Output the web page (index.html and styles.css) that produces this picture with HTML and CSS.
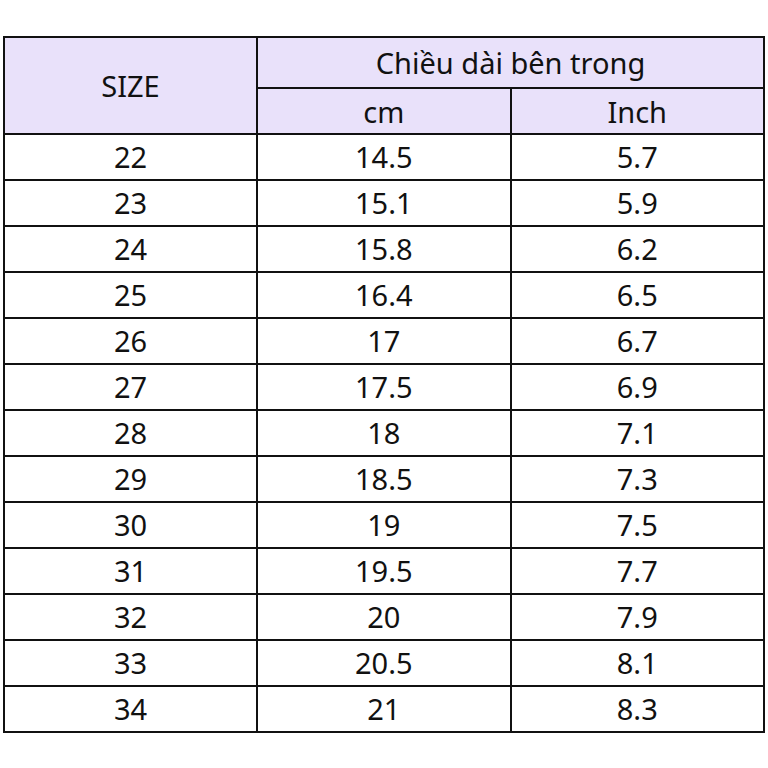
FILE: index.html
```html
<!DOCTYPE html>
<html>
<head>
<meta charset="utf-8">
<link rel="stylesheet" href="styles.css">
</head>
<body>
<table class="size-table">
  <thead>
    <tr class="head-top">
      <th rowspan="2" class="col-size">SIZE</th>
      <th colspan="2">Chiều dài bên trong</th>
    </tr>
    <tr class="head-sub">
      <th class="col-cm">cm</th>
      <th class="col-in">Inch</th>
    </tr>
  </thead>
  <tbody>
    <tr><td>22</td><td>14.5</td><td>5.7</td></tr>
    <tr><td>23</td><td>15.1</td><td>5.9</td></tr>
    <tr><td>24</td><td>15.8</td><td>6.2</td></tr>
    <tr><td>25</td><td>16.4</td><td>6.5</td></tr>
    <tr><td>26</td><td>17</td><td>6.7</td></tr>
    <tr><td>27</td><td>17.5</td><td>6.9</td></tr>
    <tr><td>28</td><td>18</td><td>7.1</td></tr>
    <tr><td>29</td><td>18.5</td><td>7.3</td></tr>
    <tr><td>30</td><td>19</td><td>7.5</td></tr>
    <tr><td>31</td><td>19.5</td><td>7.7</td></tr>
    <tr><td>32</td><td>20</td><td>7.9</td></tr>
    <tr><td>33</td><td>20.5</td><td>8.1</td></tr>
    <tr><td>34</td><td>21</td><td>8.3</td></tr>
  </tbody>
</table>
</body>
</html>
```
FILE: styles.css
```css
html, body {
  margin: 0;
  padding: 0;
  background: #ffffff;
}
body {
  padding: 36px 3px 0 3px;
  font-family: "Noto Sans", "Open Sans", sans-serif;
  color: #111111;
}
.size-table {
  border-collapse: collapse;
  width: 762px;
  table-layout: fixed;
}
.size-table th,
.size-table td {
  border: 2px solid #111111;
  padding: 0;
  text-align: center;
  font-weight: normal;
  font-size: 29px;
  line-height: 1;
}
.size-table th {
  background: #e9e1fa;
}
.size-table td {
  padding-bottom: 1px;
}
.col-size { width: 251px; }
.col-cm { width: 251px; }
.head-top { height: 51px; }
.head-sub { height: 46px; }
.size-table tbody tr { height: 46px; }
```
